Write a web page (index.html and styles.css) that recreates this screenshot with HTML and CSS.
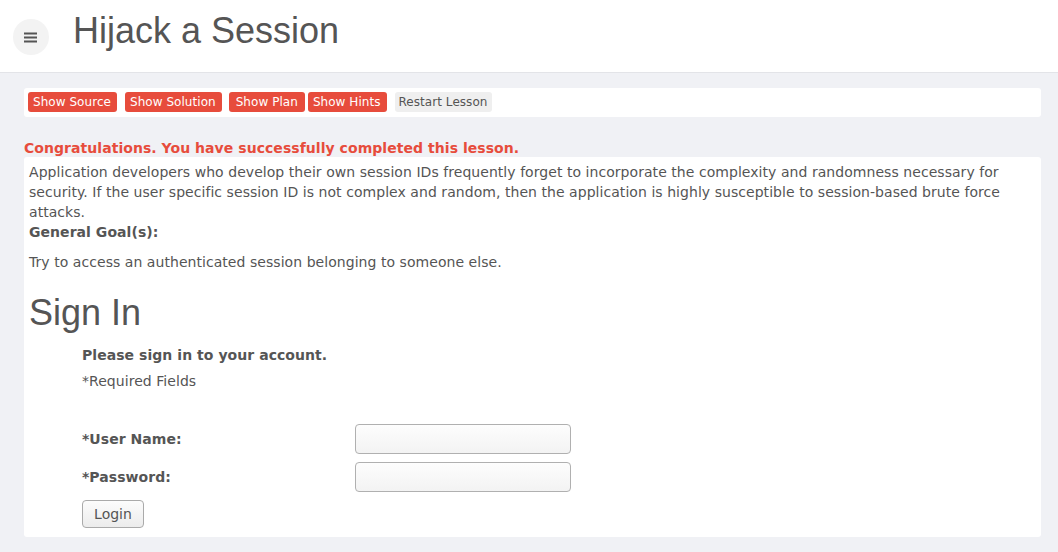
FILE: index.html
```html
<!DOCTYPE html>
<html>
<head>
<meta charset="utf-8">
<link rel="stylesheet" href="styles.css">
</head>
<body>
<header class="topbar">
  <button class="menu-btn" aria-label="menu">
    <svg width="14" height="11" viewBox="0 0 14 11"><rect x="0" y="0.5" width="13" height="2" fill="#555"/><rect x="0" y="4.5" width="13" height="2" fill="#555"/><rect x="0" y="8.5" width="13" height="2" fill="#555"/></svg>
  </button>
  <h1 class="title">Hijack a Session</h1>
</header>
<main class="main">
  <div class="toolbar">
    <span class="btn red">Show Source</span>
    <span class="btn red">Show Solution</span>
    <span class="btn red wide">Show Plan</span>
    <span class="btn red tight">Show Hints</span>
    <span class="btn gray">Restart Lesson</span>
  </div>
  <div class="congrats">Congratulations. You have successfully completed this lesson.</div>
  <section class="card">
    <p class="intro">Application developers who develop their own session IDs frequently forget to incorporate the complexity and randomness necessary for security. If the user specific session ID is not complex and random, then the application is highly susceptible to session-based brute force attacks.</p>
    <div class="goal-title">General Goal(s):</div>
    <p class="goal">Try to access an authenticated session belonging to someone else.</p>
    <h2 class="signin">Sign In</h2>
    <div class="form">
      <div class="please">Please sign in to your account.</div>
      <div class="req">*Required Fields</div>
      <div class="row row-first"><label class="lbl">*User Name:</label><input class="inp" type="text"></div>
      <div class="row"><label class="lbl">*Password:</label><input class="inp" type="password"></div>
      <button class="login">Login</button>
    </div>
  </section>
</main>
</body>
</html>
```
FILE: styles.css
```css
* { box-sizing: border-box; }
html, body { margin: 0; padding: 0; }
body {
  background: #f0f1f5;
  font-family: "DejaVu Sans", Verdana, sans-serif;
  color: #555;
  font-size: 14px;
  width: 1058px;
  height: 552px;
  overflow: hidden;
}
.topbar {
  height: 73px;
  background: #fff;
  border-bottom: 1px solid #e3e4e8;
  display: flex;
  align-items: flex-start;
}
.menu-btn {
  margin: 19px 0 0 13px;
  width: 36px;
  height: 36px;
  border-radius: 50%;
  border: none;
  background: #f3f3f3;
  display: flex;
  align-items: center;
  justify-content: center;
  padding: 0;
}
.title {
  margin: 9px 0 0 24px;
  font-family: "Liberation Sans", Arial, sans-serif;
  font-weight: normal;
  font-size: 36px;
  line-height: 44px;
  color: #555;
}
.main {
  padding: 15px 17px 0 24px;
}
.toolbar {
  background: #fff;
  border-radius: 3px;
  height: 29px;
  padding: 4px 4px;
  display: flex;
  gap: 8px;
}
.btn {
  font-size: 12px;
  line-height: 20px;
  height: 20px;
  padding: 0 6px 0 5px;
  border-radius: 3px;
  letter-spacing: 0.05px;
}
.wide { padding: 0 7px 0 7px; margin-left: -1px; }
.tight { margin-left: -5px; }
.red { background: #e74c3c; color: #fff; }
.gray { background: #efefef; color: #555; padding: 0 5px 0 4px; }
.congrats {
  margin-top: 22px;
  color: #e74c3c;
  font-weight: bold;
  font-size: 14px;
  line-height: 18px;
  height: 18px;
  letter-spacing: 0.05px;
}
.card {
  background: #fff;
  border-radius: 3px;
  padding: 5px 5px 10px 5px;
  height: 380px;
  letter-spacing: 0.05px;
}
.intro { margin: 0; line-height: 20px; }
.goal-title { font-weight: bold; line-height: 20px; }
.goal { margin: 10px 0 0 0; line-height: 20px; }
.signin {
  margin: 19px 0 0 0;
  font-family: "Liberation Sans", Arial, sans-serif;
  font-weight: normal;
  font-size: 36px;
  line-height: 44px;
  color: #555;
  letter-spacing: 0;
}
.form { padding-left: 53px; }
.please { margin-top: 10px; font-weight: bold; line-height: 20px; }
.req { margin-top: 6px; line-height: 20px; }
.row { display: flex; align-items: center; height: 30px; }
.row-first { margin-top: 33px; }
.row + .row { margin-top: 8px; }
.lbl { font-weight: bold; width: 273px; }
.inp {
  width: 216px;
  height: 30px;
  border: 1px solid #b0b0b0;
  border-radius: 4px;
  background: linear-gradient(#fdfdfd, #f3f3f3);
}
.login {
  margin-top: 8px;
  font-family: "DejaVu Sans", sans-serif;
  font-size: 14px;
  color: #555;
  width: 62px;
  height: 28px;
  border: 1px solid #aaa;
  border-radius: 4px;
  background: linear-gradient(#fcfcfc, #ececec);
  padding: 0;
}
```
